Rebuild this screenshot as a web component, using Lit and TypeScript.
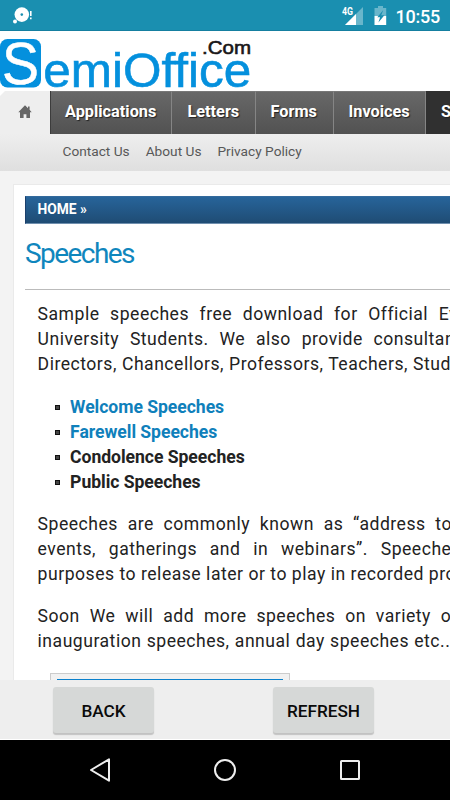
import { LitElement, html, css } from "lit";
import { customElement } from "lit/decorators.js";

type Line = [text: string, spacing: number];

const intro: Line[] = [
  ["Sample speeches free download for Official Events,", 5.7],
  ["University Students. We also provide consultancy", 5.9],
  ["Directors, Chancellors, Professors, Teachers, Students", 0.2],
];
const about: Line[] = [
  ["Speeches are commonly known as “address to the", 4.9],
  ["events, gatherings and in webinars”. Speeches are", 7.9],
  ["purposes to release later or to play in recorded programs", 0.05],
];
const soon: Line[] = [
  ["Soon We will add more speeches on variety of topics", 5],
  ["inauguration speeches, annual day speeches etc...", 0.4],
];

@customElement("status-bar")
class StatusBar extends LitElement {
  static styles = css`
    :host { display: flex; height: 31px; background: #1a8fb0; box-sizing: border-box;
      border-bottom: 1px solid #157fa0; color: #fff; font-family: Roboto, sans-serif;
      align-items: center; padding: 0 10px 0 12px; }
    .grow { flex: 1; }
    .net { width: 23px; height: 20px; margin-right: 10px; }
    .bat { width: 13px; height: 19px; margin-right: 9px; }
    .time { font-size: 18px; line-height: 31px; letter-spacing: -0.25px; font-weight: 500; margin-top: 3px; }
    .g { font: 700 10px Roboto, sans-serif; }
  `;
  render() {
    return html`
      <svg width="22" height="18" viewBox="0 0 22 18">
        <circle cx="9.8" cy="8.6" r="7.3" fill="#fff" />
        <circle cx="9.8" cy="8.6" r="1.3" fill="#1a8fb0" />
        <circle cx="3" cy="15.4" r="2" fill="#fff" />
        <path d="M18.8 5v5M18.8 11.6v1.6" stroke="#fff" stroke-width="1.6" />
      </svg>
      <div class="grow"></div>
      <svg class="net" viewBox="0 0 23 20">
        <path d="M22 2V20H4Z" fill="#fff" opacity=".35" />
        <path d="M15 9V20H4Z" fill="#fff" />
        <text class="g" x="1" y="10" fill="#fff" textLength="11" lengthAdjust="spacingAndGlyphs">4G</text>
      </svg>
      <svg class="bat" viewBox="0 0 13 19">
        <path d="M4 0h5v2h3.2v8H.5V2H4Z" fill="#fff" opacity=".35" />
        <path d="M.5 10h11.7v9H.5Z" fill="#fff" />
        <path d="M9.3 4L3.3 11.3h2.8L4.4 16.5l6-7.2H7.2Z" fill="#1a8fb0" />
      </svg>
      <div class="time">10:55</div>`;
  }
}

@customElement("site-header")
class SiteHeader extends LitElement {
  static styles = css`
    :host { display: block; font-family: Roboto, sans-serif; }
    .logo { display: block; background: #fff; }
    .word { font-family: "Liberation Sans", sans-serif; }
    nav { display: flex; height: 43px; width: 520px; background: linear-gradient(#686868, #525252); }
    .home { width: 50px; background: #eee; box-sizing: border-box; padding: 13px 0 0 18px;
      clip-path: polygon(5px 0, 100% 0, 100% 100%, 0 100%, 0 5px); }
    .homewrap { background: #fff; border-right: 1px solid #3c3c3c; box-sizing: border-box; width: 51px; display: flex; }
    .tab { box-sizing: border-box; border-right: 1px solid #858585; color: #fff; font-size: 16.3px;
      font-weight: 700; line-height: 39px; text-shadow: 1px 1px 1px #222; padding-left: 14px;
      white-space: nowrap; border-top: 1px solid #777; }
    .apps { width: 121px; } .letters { width: 84px; padding-left: 15.5px; } .forms { width: 78px; padding-left: 14.5px; }
    .inv { width: 92px; padding-left: 14.5px; }
    .on { background: #303030; width: 94px; border: 0; padding: 1px 0 0 15px; }
    .sub { display: flex; gap: 16px; height: 37px; background: linear-gradient(#eee, #dfdfdf);
      padding-left: 62.5px; font-size: 13.7px; line-height: 35px; color: #585858; white-space: nowrap; }
  `;
  render() {
    return html`
      <svg class="logo" width="450" height="60" viewBox="0 31 450 60">
        <rect x="0" y="39" width="41" height="48.5" rx="7.5" fill="#0490dd" />
        <g class="word">
          <text x="2" y="83.5" font-size="58.5" fill="#fff" stroke="#fff" stroke-width=".5" textLength="37" lengthAdjust="spacingAndGlyphs">S</text>
          <text x="43.3" y="86.5" font-size="49" fill="#0490dd" stroke="#0490dd" stroke-width=".6" textLength="208" lengthAdjust="spacingAndGlyphs">emiOffice</text>
          <text x="202" y="53.5" font-size="19" fill="#1a1718" stroke="#1a1718" stroke-width=".6" textLength="49" lengthAdjust="spacingAndGlyphs">.Com</text>
        </g>
      </svg>
      <nav>
        <div class="homewrap"><div class="home">
          <svg width="14" height="14" viewBox="0 0 14 14"><path d="M7 .2L10 3.2V1.5h1.6v3.3L13.7 7.2H12V13H8.4V9.3H5.6V13H2V7.2H.3Z" fill="#666" /></svg>
        </div></div>
        <div class="tab apps">Applications</div>
        <div class="tab letters">Letters</div>
        <div class="tab forms">Forms</div>
        <div class="tab inv">Invoices</div>
        <div class="tab on">Speeches</div>
      </nav>
      <div class="sub"><span>Contact Us</span><span>About Us</span><span>Privacy Policy</span></div>`;
  }
}

@customElement("app-root")
class AppRoot extends LitElement {
  static styles = css`
    :host { display: flex; flex-direction: column; width: 450px; height: 800px; overflow: hidden;
      background: #f3f3f3; font-family: Roboto, sans-serif; }
    .page { height: 649px; overflow: hidden; flex: none; }
    .card { margin: 13px 0 0 13px; width: 600px; background: #fff; border: 1px solid #eaeaea;
      box-sizing: border-box; height: 520px; padding: 11px 0 0 11px; }
    .crumb { height: 28px; box-sizing: border-box; background: linear-gradient(#27649a, #1f4c74);
      border: 1px solid #1b3f6b; border-top-color: #336a9c; border-bottom-color: #6f8fae; color: #fff; font-size: 13.8px;
      font-weight: 700; line-height: 25px; padding-left: 11.5px; }
    h1 { margin: 12px 0 0; font-size: 28px; font-weight: 400; letter-spacing: -1.55px; line-height: 35px;
      color: #0f86bd; height: 53px; border-bottom: 1px solid #bbb; }
    .body { padding: 12px 0 0 12.6px; font-size: 17.6px; line-height: 25px; letter-spacing: .5px; color: #222; white-space: nowrap; }
    .para { margin-bottom: 17.5px; }
    .para + .para { margin-top: -.5px; }
    ul { list-style: none; margin: 0 0 17.5px; padding: 0 0 0 17px; letter-spacing: -.05px; font-weight: 700; }
    li { display: flex; align-items: center; gap: 10.5px; }
    li::before { content: ""; width: 5px; height: 5px; box-sizing: border-box; background: #444; border: 1px solid #111; }
    .link { color: #0f80bb; }
    .frame { margin-left: 12.4px; margin-top: 19px; width: 240px; height: 30px; box-sizing: border-box;
      border: 1px solid #ccc; background: #f1f1f1; padding: 5px 6px; }
    .ad { border-top: 1px solid #0a80cc; height: 20px; }
    .actions { flex: none; height: 60px; box-sizing: border-box; background: #eee; border-bottom: 1px solid #fff;
      display: flex; padding: 7px 0 0 53px; gap: 119px; }
    .btn { width: 101px; height: 46px; border-radius: 3px; background: #d6d8d7; color: #0a0a0a; font-size: 17.2px;
      font-weight: 500; line-height: 48px; text-align: center; box-shadow: 0 2px 1px #c2c2c2; }
    .keys { flex: none; height: 60px; background: #000; display: block; }
  `;
  para(lines: Line[]) {
    return html`<div class="para">${lines.map(([t, s]) => html`<div style="word-spacing:${s}px">${t}</div>`)}</div>`;
  }
  render() {
    return html`
      <status-bar></status-bar>
      <div class="page">
        <site-header></site-header>
        <div class="card">
          <div class="crumb">HOME »</div>
          <h1>Speeches</h1>
          <div class="body">
            ${this.para(intro)}
            <ul>
              <li><span class="link">Welcome Speeches</span></li>
              <li><span class="link">Farewell Speeches</span></li>
              <li>Condolence Speeches</li>
              <li>Public Speeches</li>
            </ul>
            ${this.para(about)}
            ${this.para(soon)}
            <div class="frame"><div class="ad"></div></div>
          </div>
        </div>
      </div>
      <div class="actions"><div class="btn">BACK</div><div class="btn">REFRESH</div></div>
      <svg class="keys" width="450" height="60" viewBox="0 740 450 60" fill="none" stroke="#eee" stroke-width="2">
        <path d="M109 759.3V780.7L91 770Z" stroke-linejoin="round" />
        <circle cx="225" cy="770" r="10" />
        <rect x="341" y="761" width="18" height="18" rx=".5" />
      </svg>`;
  }
}
